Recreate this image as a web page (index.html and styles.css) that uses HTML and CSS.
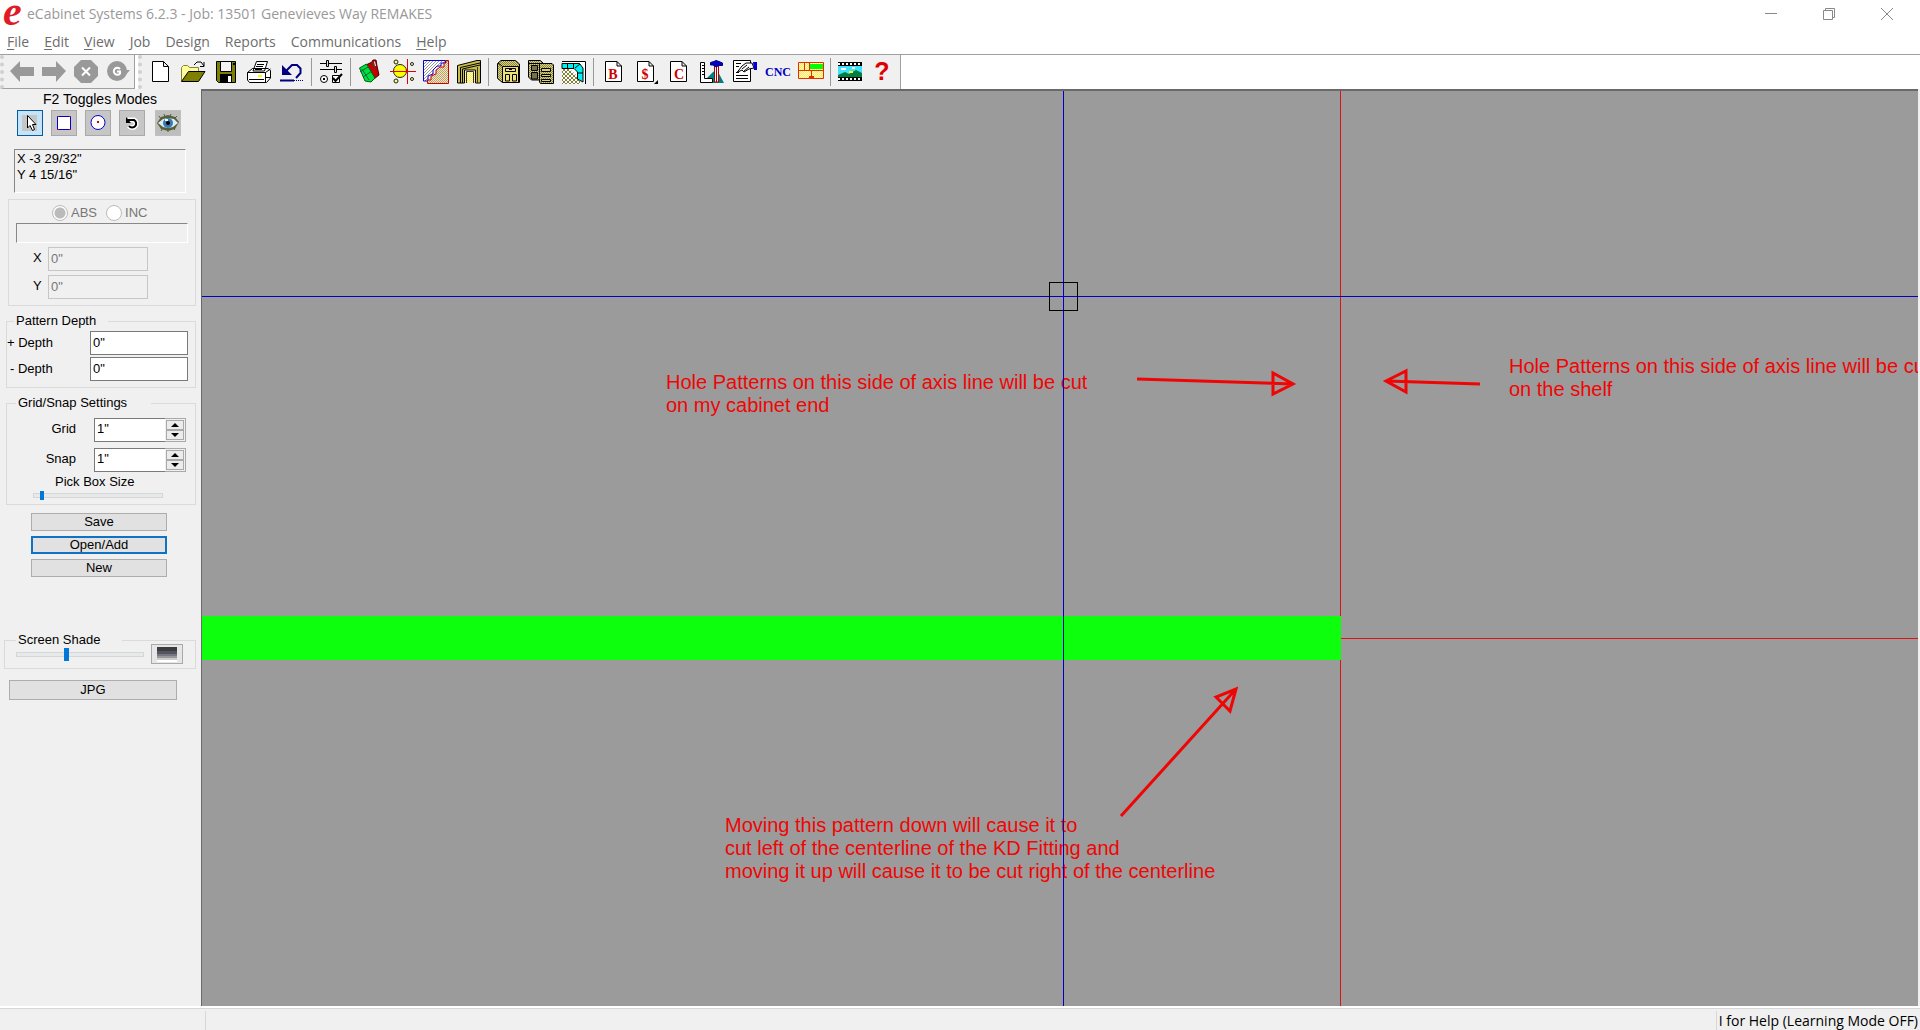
FILE: index.html
```html
<!DOCTYPE html>
<html lang="en">
<head>
<meta charset="utf-8">
<title>eCabinet Systems 6.2.3</title>
<link rel="stylesheet" href="styles.css">
</head>
<body>
<svg class="defs" width="0" height="0" aria-hidden="true">
  <defs>
    <pattern id="hatch" width="3" height="3" patternUnits="userSpaceOnUse"><rect width="3" height="3" fill="#fff"/><path d="M-1 1L1 -1M0 3L3 0M2 4L4 2" stroke="#999" stroke-width="1"/></pattern>
    <pattern id="tan" width="2" height="2" patternUnits="userSpaceOnUse"><rect width="2" height="2" fill="#f2e6c8"/><path d="M0 0h1v1h-1zM1 1h1v1h-1z" fill="#b9a46c"/></pattern>
    <pattern id="yellow" width="2" height="2" patternUnits="userSpaceOnUse"><rect width="2" height="2" fill="#fffbd0"/><path d="M0 0h1v1h-1zM1 1h1v1h-1z" fill="#fce94a"/></pattern>
    <pattern id="olive" width="2" height="2" patternUnits="userSpaceOnUse"><rect width="2" height="2" fill="#d6d08c"/><path d="M0 0h1v1h-1zM1 1h1v1h-1z" fill="#8c8638"/></pattern>
    <pattern id="check" width="4" height="4" patternUnits="userSpaceOnUse"><rect width="4" height="4" fill="#fff"/><path d="M0 0h2v2h-2zM2 2h2v2h-2z" fill="#85803a"/></pattern>
  </defs>
</svg>

<header class="titlebar">
  <svg class="logo" viewBox="0 0 22 26" aria-hidden="true"><text x="1" y="24">e</text></svg>
  <h1 class="title">eCabinet Systems 6.2.3 - Job: 13501 Genevieves Way REMAKES</h1>
  <div class="window-controls">
    <button aria-label="Minimize"><svg viewBox="0 0 14 14"><path d="M1 6.500h12"/></svg></button>
    <button aria-label="Restore"><svg viewBox="0 0 14 14"><path d="M1.500 3.500h9v9h-9zM3.500 3.500v-2h9v9h-2"/></svg></button>
    <button aria-label="Close"><svg viewBox="0 0 14 14"><path d="M1 1L13 13M13 1L1 13"/></svg></button>
  </div>
</header>

<nav class="menubar">
  <a href="#file"><u>F</u>ile</a><a href="#edit"><u>E</u>dit</a><a href="#view"><u>V</u>iew</a><a href="#job">Job</a><a href="#design">Design</a><a href="#reports">Reports</a><a href="#communications">Communications</a><a href="#help"><u>H</u>elp</a>
</nav>

<div class="toolbars">
  <div class="toolbar nav-tools" role="toolbar">
    <button aria-label="Back"><svg viewBox="0 0 26 26"><path fill="#999" d="M1 12L11 2V8H25V17H11V23Z"/></svg></button>
    <button aria-label="Forward"><svg viewBox="0 0 26 26"><path fill="#999" d="M25 12L15 2V8H1V17H15V23Z"/></svg></button>
    <button aria-label="Stop"><svg viewBox="0 0 26 26"><path fill="#999" d="M8 1H18L25 8V17L18 24H8L1 17V8Z"/><path d="M9 8.500L17 16.500M17 8.500L9 16.500" stroke="#fff" stroke-width="2"/></svg></button>
    <button aria-label="Refresh"><svg viewBox="0 0 26 26"><circle cx="12" cy="12" r="10" fill="#999"/><path fill="#999" d="M13 11H25L19 18Z"/><path d="M15 10A3.500 3.500 0 1 0 15 14.500V12.500H12" fill="none" stroke="#fff" stroke-width="2"/></svg></button>
  </div>
  <div class="toolbar main-tools" role="toolbar">
    <button aria-label="New"><svg viewBox="0 0 26 26"><path fill="#fff" stroke="#000" d="M5.500 2.500H16.500L21.500 7.500V22.500H5.500ZM16.500 2.500V7.500H21.500"/></svg></button>
    <button aria-label="Open"><svg viewBox="0 0 26 26"><path d="M14 6L17 3H21L24 7M24 3V7.500H20" fill="none" stroke="#000"/><path fill="#fffb9a" stroke="#85803a" d="M1.500 22V8.500L3.500 6.500H7.500L9.500 8.500H18.500V13"/><path fill="#808000" stroke="#000" d="M1.500 22.500L8.500 12.500H25L18.500 22.500Z"/></svg></button>
    <button aria-label="Save"><svg viewBox="0 0 26 26"><path fill="#808000" stroke="#000" d="M3.500 2.500H22.500V23.500H5.500L3.500 21.500Z"/><path fill="#f4f4f4" stroke="#000" d="M7.500 2.500H18.500V12.500H7.500Z"/><path d="M7 15H19V23H7Z"/><path fill="#fff" d="M15 17H18V23H15Z"/><path d="M20 4h2v2h-2z"/></svg></button>
    <button aria-label="Print"><svg viewBox="0 0 26 26"><path fill="#fff" stroke="#000" d="M7 12L10.500 2.500H21.500L18.500 12ZM1.500 13.500L6.500 9.500H22L24.500 11.500V19L20.500 23.500H3.500L1.500 21ZM1.500 13.500H19.500V23M19.500 13.500L24.500 10"/><path d="M11 5.500H18M10 7.500H17M9 10.500H16M3 20.500H18M20 18.500H24" stroke="#000"/><path d="M12 16h4v2h-4z" fill="#ff0"/></svg></button>
    <button aria-label="Undo"><svg viewBox="0 0 26 26"><path d="M7 12L13 6H18L21.500 9.500V14L17 19" fill="none" stroke="#000080" stroke-width="2"/><path fill="#000080" d="M3 6V16H13Z"/><path d="M1 21.500H15" stroke="#000080" stroke-width="2"/><path d="M15 21.500H24" stroke="#000080" stroke-dasharray="1 1"/></svg></button>
    <span class="sep"></span>
    <button aria-label="Settings"><svg viewBox="0 0 26 26"><path d="M2 4.500H24M2 10.500H24" stroke="#000"/><path fill="#ddd" stroke="#000" d="M8.500 1.500H10.500V7.500H8.500ZM16.500 7.500H18.500V13.500H16.500Z"/><circle cx="6" cy="20" r="3.500" fill="#fff" stroke="#000"/><path d="M5 19h2v2h-2z"/><path fill="#fff" stroke="#000" d="M14.500 16.500H21.500V23.500H14.500Z"/><path d="M15 19L17.500 22L24 15" stroke="#000" stroke-width="2" fill="none"/></svg></button>
    <span class="sep"></span>
    <button aria-label="Materials"><svg viewBox="0 0 26 26"><path fill="#c60000" stroke="#400" d="M9 6L15 3L16 1H19L20 7L22 16L17 20Z"/><path fill="#00e03a" stroke="#006010" d="M2.500 9L9.500 5L18 19L14 23L8 22Z"/><path d="M15 3L18 10M5 10L12 21M3 13L11 8M6 18L15 12" stroke="#064" fill="none"/><path d="M17.500 2.500L18.500 7" stroke="#fff" stroke-width="1"/></svg></button>
    <button aria-label="Boring"><svg viewBox="0 0 26 26"><circle cx="10" cy="12" r="6.500" fill="#ff0" stroke="#222"/><g fill="#fffb80" stroke="#222"><circle cx="6" cy="3" r="2"/><circle cx="6" cy="22" r="2"/><circle cx="22" cy="5" r="1.500"/><circle cx="22" cy="20" r="1.500"/></g><path d="M0 12.500H26M17.500 0V25" stroke="#e00000"/></svg></button>
    <button aria-label="Profiles"><svg viewBox="0 0 26 26"><path fill="url(#hatch)" stroke="#0000d8" stroke-width="1" d="M.5 1.500H22.500V4H18V7H14L10 11V15L5 17V22H.5Z"/><path fill="url(#tan)" stroke="#d00000" d="M25.500 1.500V24.500H4.500V21H8V17L13 15V11L17 8H21V4H23V1.500Z"/></svg></button>
    <button aria-label="Doors"><svg viewBox="0 0 26 26"><path fill="#c9be4a" stroke="#000" d="M1.500 24V6.500L21 1.500H24.500V24H19.500V11H8.500V24Z"/><path fill="none" stroke="#000" d="M4.500 24V8.500L24 4M6.500 24V10L24 6"/><path fill="url(#yellow)" d="M9 12H19V24H9Z"/><path fill="none" stroke="#333" d="M10.500 24V12.500H17.500V24M21.500 8V24"/></svg></button>
    <span class="sep"></span>
    <button aria-label="Cabinet"><svg viewBox="0 0 26 26"><path fill="url(#olive)" stroke="#000" d="M2.500 4.500L6 1.500H20.500L24.500 5V23.500H7.500L2.500 19.500Z"/><path fill="#eee07a" stroke="#000" d="M7.500 7.500H23.500V23.500H7.500ZM10.500 9.500H20.500V12.500H10.500ZM10.500 15.500H14.500V22H10.500ZM17.500 15.500H21.500V22H17.500Z"/><path d="M3 4L7 7M14 10.500H17" stroke="#000"/></svg></button>
    <button aria-label="Cabinet group"><svg viewBox="0 0 26 26"><path fill="url(#olive)" stroke="#000" d="M.5 1.500H12.500L15 4V21H3.500L.5 18ZM.5 4.500H14"/><path fill="#777050" stroke="#000" d="M3.500 6.500H9.500V11.500H3.500ZM3.500 13.500H9.500V20H3.500Z"/><path fill="url(#olive)" stroke="#000" d="M11.500 4.500H24L25.500 6V24.500H12.500L11.500 23Z"/><path fill="#d8d078" stroke="#000" d="M13.500 9.500H22.500V12.500H13.500ZM13.500 15.500H22.500V17.500H13.500ZM13.500 20.500H22.500V22.500H13.500Z"/></svg></button>
    <button aria-label="Room layout"><svg viewBox="0 0 26 26"><path fill="url(#check)" d="M1 9H19V25H1Z"/><path fill="#fff" stroke="#000" d="M1 2.500H24.500V25"/><path fill="#00f0f0" stroke="#000" d="M1 4.500H18.500L22 9V23L16.500 20V13L13 9.500H1Z"/><path d="M6.500 5V9M12.500 5V9M14 9L19 5M17 14H22" stroke="#000"/></svg></button>
    <span class="sep"></span>
    <button aria-label="Buy list"><svg viewBox="0 0 26 26"><path fill="#fff" stroke="#000" d="M5.500 2.500H17L21.500 7V22.500H5.500ZM17 2.500V7H21.500"/><text class="glyph" x="13" y="20">B</text></svg></button>
    <button aria-label="Pricing"><svg viewBox="0 0 26 26"><path fill="#fff" stroke="#000" d="M4.500 2.500H16L20.500 7V22.500H4.500ZM16 2.500V7H20.500"/><text class="glyph" x="12" y="20">$</text><path d="M25 21V25H21Z"/></svg></button>
    <button aria-label="Cut list"><svg viewBox="0 0 26 26"><path fill="#fff" stroke="#000" d="M4.500 2.500H16L20.500 7V22.500H4.500ZM16 2.500V7H20.500"/><text class="glyph" x="13" y="20">C</text></svg></button>
    <button aria-label="Shop tools"><svg viewBox="0 0 26 26"><path fill="#008080" d="M3 24L14 13L18 11L25 24Z"/><path fill="#fff" stroke="#000" d="M1.500 3.500H5.500V19.500H13.500V23.500H1.500Z"/><path d="M3 6.500H5M3 9.500H5M3 12.500H5M3 15.500H5" stroke="#000"/><path fill="#fff" stroke="#a00" d="M15.500 6H19.500V23H15.500Z"/><path d="M17.500 6V23" stroke="#a00"/><path fill="#0000c8" stroke="#000080" d="M11.500 3.500L15 2.500L17 1.500L20 2.500L23.500 4V6.500H20L17 8L14 6H11.500Z"/></svg></button>
    <button aria-label="Report form"><svg viewBox="0 0 26 26"><path fill="#fff" stroke="#000" d="M1.500 1.500H18.500V22.500H1.500Z"/><path d="M4 4.500H9M4 7.500H7M4 13.500H7M4 16.500H16M4 19.500H16" stroke="#000"/><path fill="#fff" stroke="#000" d="M5 13.500L10 7L14 4H20L22 9L17 10L12 13L10 11Z"/><path d="M10 10L15 6M12 12L17 8" stroke="#000"/><path fill="#0000d0" d="M21 3H25V11H22Z"/></svg></button>
    <button aria-label="CNC"><svg viewBox="0 0 26 26"><text class="cnc" x="13" y="17">CNC</text></svg></button>
    <button aria-label="Nesting"><svg viewBox="0 0 26 26"><path fill="url(#yellow)" d="M1 4H25V19H1Z"/><path fill="#0f0" d="M12 5H25V10H12Z"/><path fill="none" stroke="#e03000" d="M.5 3.500H25.500V19.500H.5ZM.5 11.500H25.500M6.500 4V11M11.500 4V11M13.500 12V19"/><path fill="#e03000" d="M11 19V17H13V15H14V17H16V19Z"/></svg></button>
    <span class="sep"></span>
    <button aria-label="Video"><svg viewBox="0 0 26 26"><path d="M1 3H25V22H1Z"/><path fill="#40e0ff" d="M1 7H25V18H1Z"/><path fill="#008040" d="M1 16L8 13L12 15L19 11L25 14V18H1Z"/><path fill="#fff" d="M4 9h5v2h-5zM15 8h3v2h-3z"/><path fill="#ff0" d="M12 12h4v2h-4z"/><path d="M1 5H25M1 20H25" stroke="#fff" stroke-width="2" stroke-dasharray="2 2"/></svg></button>
    <button aria-label="Help"><svg viewBox="0 0 26 26"><text class="help" x="12" y="21">?</text></svg></button>
  </div>
</div>

<main class="workspace">
  <aside class="sidebar">
    <h2 class="modes-title">F2 Toggles Modes</h2>
    <div class="modes">
      <button class="mode selected" aria-label="Select"><svg viewBox="0 0 24 24"><path fill="#c6c6c6" d="M4 4H19V20H4Z"/><path fill="#fff" stroke="#000" d="M9.500 4.500V17L12 14.500L14.500 19.500L16.500 18.500L14.500 13.500H18Z"/></svg></button>
      <button class="mode" aria-label="Rectangle"><svg viewBox="0 0 24 24"><path fill="#fff" stroke="#0000d0" d="M5.500 5.500H18.500V18.500H5.500Z"/><path fill="#d00020" d="M5 5h2v1h-2zM17 5h2v1h-2zM5 18h2v1h-2zM17 18h2v1h-2z"/></svg></button>
      <button class="mode" aria-label="Circle"><svg viewBox="0 0 24 24"><circle cx="12" cy="11.500" r="7" fill="#fff" stroke="#0000d0"/><path fill="#c00" d="M11 10h2v2h-2z"/></svg></button>
      <button class="mode" aria-label="Rotate"><svg viewBox="0 0 24 24"><path d="M8 9H14A4 4 0 1 1 9 15" fill="none" stroke="#fff" stroke-width="5"/><path d="M8 9H14A4 4 0 1 1 9 15" fill="none" stroke="#000" stroke-width="2"/><path d="M6 6V12H11Z"/></svg></button>
      <button class="mode view" aria-label="View"><svg viewBox="0 0 24 24"><path fill="#55603a" d="M1 12L5 6L12 4L19 6L23 11L19 18L12 20L5 18Z"/><path fill="#dcecf4" d="M2 12L7 8L12 7L18 8L22 12L17 16L12 17L7 16Z"/><circle cx="12" cy="12" r="5" fill="#3a7ab0"/><circle cx="12" cy="12" r="2"/><path fill="#fff" d="M9 8h3v2h-3z"/><path d="M3 5L5 8M8 3L9 6M15 3L14 6M21 5L18 8M5 20L7 17M12 21V18M19 19L17 17" stroke="#55603a"/></svg></button>
    </div>
    <output class="coords">X -3 29/32"<br>Y 4 15/16"</output>

    <fieldset class="group entry" disabled>
      <div class="radios">
        <label><input type="radio" name="coord" checked>ABS</label>
        <label><input type="radio" name="coord">INC</label>
      </div>
      <input class="command" type="text" aria-label="Command">
      <div class="axis-row"><label for="x">X</label><input id="x" type="text" value='0"'></div>
      <div class="axis-row"><label for="y">Y</label><input id="y" type="text" value='0"'></div>
    </fieldset>

    <fieldset class="group depth">
      <legend>Pattern Depth</legend>
      <div class="depth-row"><label for="plus">+ Depth</label><input id="plus" type="text" value='0"'></div>
      <div class="depth-row"><label for="minus">- Depth</label><input id="minus" type="text" value='0"'></div>
    </fieldset>

    <fieldset class="group grid">
      <legend>Grid/Snap Settings</legend>
      <div class="spin-row"><label for="grid">Grid</label>
        <div class="spinner"><input id="grid" type="text" value='1"'><div class="steps"><button aria-label="Grid up"><svg viewBox="0 0 8 4"><path d="M0 4L4 0L8 4Z"/></svg></button><button aria-label="Grid down"><svg viewBox="0 0 8 4"><path d="M0 0H8L4 4Z"/></svg></button></div></div>
      </div>
      <div class="spin-row"><label for="snap">Snap</label>
        <div class="spinner"><input id="snap" type="text" value='1"'><div class="steps"><button aria-label="Snap up"><svg viewBox="0 0 8 4"><path d="M0 4L4 0L8 4Z"/></svg></button><button aria-label="Snap down"><svg viewBox="0 0 8 4"><path d="M0 0H8L4 4Z"/></svg></button></div></div>
      </div>
      <label class="pick-label" for="pick">Pick Box Size</label>
      <input class="slider pick" id="pick" type="range" min="0" max="100" value="5">
    </fieldset>

    <div class="actions">
      <button class="btn">Save</button>
      <button class="btn primary">Open/Add</button>
      <button class="btn">New</button>
    </div>

    <fieldset class="group shade">
      <legend><label for="shade">Screen Shade</label></legend>
      <div class="shade-row">
        <input class="slider" id="shade" type="range" min="0" max="100" value="39">
        <button class="swatch" aria-label="Background shade"><span></span></button>
      </div>
    </fieldset>
    <button class="btn jpg">JPG</button>
  </aside>

  <section class="canvas" aria-label="Drawing">
    <div class="axis-v"></div>
    <div class="axis-h"></div>
    <div class="board"></div>
    <svg class="arrows" aria-hidden="true">
      <path d="M935 288L1091 293M1071 282V303L1091 293Z"/>
      <path d="M1278 293L1184 290M1204 280V301L1184 290Z"/>
      <path d="M919 725L1034 598M1014 606L1028 620L1034 598Z"/>
    </svg>
    <p class="note cabinet-note">Hole Patterns on this side of axis line will be cut<br>on my cabinet end</p>
    <p class="note shelf-note">Hole Patterns on this side of axis line will be cut<br>on the shelf</p>
    <p class="note move-note">Moving this pattern down will cause it to<br>cut left of the centerline of the KD Fitting and<br>moving it up will cause it to be cut right of the centerline</p>
    <div class="cross-v"></div>
    <div class="cross-h"></div>
    <div class="pickbox"></div>
  </section>
</main>

<footer class="statusbar">
  <span class="status-left"></span>
  <span class="status-help">I for Help (Learning Mode OFF)</span>
</footer>
</body>
</html>
```
FILE: styles.css
```css
* { box-sizing: border-box; }

body {
  margin: 0;
  min-height: 100vh;
  display: flex;
  flex-direction: column;
  overflow-x: hidden;
  background: #f0f0f0;
  color: #000;
  font: 13px/16px "Liberation Sans", Arial, sans-serif;
}

button { margin: 0; padding: 0; border: 0; background: none; font: inherit; color: inherit; }
input { margin: 0; font: inherit; color: inherit; border-radius: 0; min-width: 0; }
.defs { position: absolute; }

/* Title bar */
.titlebar { display: flex; align-items: center; height: 28px; padding-left: 2px; background: #fff; }
.logo { width: 22px; height: 26px; overflow: visible; }
.logo text { font: italic bold 42px "Liberation Serif", serif; fill: #e01b24; }
.title { flex: 1; margin: 0; padding-left: 3px; font: 14px/28px "Open Sans", sans-serif; color: #999; }
.window-controls { display: flex; padding-right: 4px; }
.window-controls button { width: 58px; height: 28px; display: grid; place-items: center; }
.window-controls svg { width: 14px; height: 14px; fill: none; stroke: #888; }

/* Menu */
.menubar { display: flex; gap: 15px; height: 27px; padding: 4px 7px 0; background: #fff; border-bottom: 1px solid #a0a0a0; }
.menubar a { color: #6d6d6d; font: 14px/20px "Open Sans", sans-serif; text-decoration: none; }
.menubar u { text-underline-offset: 2px; }

/* Toolbars */
.toolbars { display: flex; height: 34px; background: #fff; }
.toolbar { display: flex; align-items: center; background: #f0f0f0; border: solid #a0a0a0; border-width: 0 1px 1px 0; }
.nav-tools { padding-left: 2px; border-left: 4px dotted #d0d0d0; }
.main-tools { margin-left: 3px; padding: 0 1px; border-left: 4px dotted #d0d0d0; border-bottom: 0; }
.toolbar button { width: 33px; height: 30px; display: grid; place-items: center; }
.nav-tools button { width: 32px; }
.toolbar svg { width: 26px; height: 26px; overflow: visible; }
.sep { width: 1px; height: 28px; margin: 0 2px 0 3px; background: #999; }
.glyph { font: bold 14px "Liberation Serif", serif; fill: #d00000; text-anchor: middle; }
.cnc { font: bold 12px "Liberation Serif", serif; fill: #0000c0; text-anchor: middle; }
.help { font: bold 25px "Liberation Sans", sans-serif; fill: #e00000; text-anchor: middle; }

/* Workspace */
.workspace { flex: 1; display: flex; padding-right: 2px; }
.sidebar { width: 201px; flex: none; display: flex; flex-direction: column; padding: 2px 5px 0 4px; }
.modes-title { margin: 0; font-size: 14px; line-height: 16px; font-weight: normal; text-align: center; }
.modes { display: flex; gap: 8px; margin: 3px 0 0 13px; }
.mode { width: 26px; height: 26px; background: #c6c6c6; border: 1px solid #a9a9a9; }
.mode svg { display: block; width: 24px; height: 24px; }
.mode.selected { background: #c4e4fa; border-color: #0a5a9c; }
.mode.view { margin-left: 2px; border-color: #c0c0c0; background: #bdbdbd; }
.coords { display: block; height: 44px; margin: 13px 10px 6px; padding: 1px 2px; border: 1px solid; border-color: #888 #fff #fff #888; }

.group { margin: 0; padding: 0; border: 1px solid #dadada; min-width: 0; }
.group legend { margin-left: 8px; padding: 0 12px 0 2px; line-height: 14px; }

.entry { height: 107px; margin-left: 4px; padding: 3px 7px 0; color: #777; }
.radios { display: flex; gap: 9px; margin-left: 36px; height: 20px; }
.radios label { display: flex; align-items: center; gap: 3px; }
.radios input { appearance: none; width: 16px; height: 16px; border: 1px solid #bbb; border-radius: 50%; background: #fff; }
.radios input:checked { background: radial-gradient(circle, #bbb 5px, #fff 6px); }
.command { display: block; width: 172px; height: 20px; background: #f0f0f0; border: 1px solid; border-color: #888 #fff #fff #888; }
.axis-row { display: flex; gap: 5px; margin-top: 4px; padding-left: 17px; }
.axis-row label { width: 10px; line-height: 22px; color: #000; }
.axis-row input { width: 100px; height: 24px; padding: 0 2px 2px; color: #777; background: #f0f0f0; border: 1px solid #c6c6c6; }

.depth { height: 74px; margin: 8px 0 0 2px; }
.depth legend { margin-left: 7px; }
.depth-row { display: flex; justify-content: space-between; height: 26px; padding: 3px 7px 0 0; }
.depth-row label { line-height: 24px; }
.depth-row + .depth-row label { padding-left: 3px; }
.depth-row input { width: 98px; height: 24px; padding: 0 2px 2px; border: 1px solid #7a7a7a; background: #fff; }

.grid { height: 109px; margin: 8px 0 0 2px; }
.grid legend { margin-left: 9px; padding-right: 24px; }
.spin-row { display: flex; justify-content: space-between; height: 24px; margin: 6px 9px 0 0; }
.grid legend + .spin-row { margin-top: 8px; }
.spin-row label { width: 69px; text-align: right; line-height: 22px; }
.spinner { display: flex; width: 92px; border: 1px solid #a9a9a9; }
.spinner input { flex: 1; padding: 0 2px 2px; border: 1px solid #7a7a7a; border-right: 0; margin: -1px 0 -1px -1px; background: #fff; }
.steps { display: flex; flex-direction: column; width: 20px; padding: 1px; }
.steps button { flex: 1; display: grid; place-items: center; border: 1px solid #a9a9a9; background: #ececec; }
.steps svg { width: 8px; height: 4px; }
.pick-label { display: block; margin: 1px 0 0 48px; line-height: 17px; }

.slider { appearance: none; display: block; height: 14px; background: none; }
.slider::-webkit-slider-runnable-track { height: 5px; background: #e7eaea; border: 1px solid #d6d6d6; }
.slider::-webkit-slider-thumb { appearance: none; width: 5px; height: 13px; margin-top: -5px; background: #0078d7; }
.pick { width: 130px; height: 10px; margin-left: 26px; }
.pick::-webkit-slider-thumb { width: 4px; height: 9px; margin-top: -3px; }

.btn { height: 18px; line-height: 16px; text-align: center; border: 1px solid #adadad; background: #e1e1e1; }
.actions { display: flex; flex-direction: column; gap: 5px; margin: 8px 29px 0 27px; }
.actions .primary { border: 2px solid #0f72c4; line-height: 14px; }

.shade { height: 36px; margin-top: 56px; }
.shade legend { margin-left: 11px; padding-right: 22px; }
.shade-row { display: flex; justify-content: space-between; align-items: center; margin-top: -3px; padding: 0 12px 0 11px; }
.shade .slider { width: 128px; }
.swatch { width: 32px; height: 20px; display: grid; place-items: center; border: 1px solid #a9a9a9; background: #e6e6e6; }
.swatch span { width: 20px; height: 15px; background: linear-gradient(#3c3c40 0 4px, #55555c 4px 7px, #777784 7px 9px, #999 9px 11px, #ccc 11px 13px, #fff 13px); }
.jpg { height: 20px; margin: 11px 19px 0 5px; }

/* Drawing area: free placement of axes, board and notes */
.canvas { position: relative; flex: 1; overflow: hidden; background: #9b9b9b; border: solid #696969; border-width: 2px 0 0 1px; }
.canvas > * { position: absolute; }
.axis-v { left: 1138px; top: 0; bottom: 0; width: 1px; background: #d81414; }
.axis-h { left: 1138px; right: 0; top: 547px; height: 1px; background: #d81414; }
.board { left: 0; top: 525px; width: 1139px; height: 44px; background: #0dff0d; }
.arrows { left: 0; top: 0; width: 100%; height: 100%; fill: none; stroke: #f00505; stroke-width: 3; }
.note { margin: 0; font-size: 20px; line-height: 23px; white-space: nowrap; color: #f00505; }
.cabinet-note { left: 464px; top: 280px; }
.shelf-note { left: 1307px; top: 264px; }
.move-note { left: 523px; top: 723px; }
.cross-v { left: 861px; top: 0; bottom: 0; width: 1px; background: #0000c8; }
.cross-h { left: 0; right: 0; top: 205px; height: 1px; background: #0000c8; }
.pickbox { left: 847px; top: 191px; width: 29px; height: 29px; border: 1px solid #000; }

/* Status bar */
.statusbar { display: flex; justify-content: space-between; height: 24px; padding-right: 2px; border-top: 2px solid #fff; box-shadow: inset 0 1px #d7d7d7; font: 14px/22px "Open Sans", sans-serif; }
.status-left { width: 206px; margin-top: 3px; border-right: 1px solid #d7d7d7; }
.status-help { margin-top: 3px; padding-left: 2px; line-height: 19px; border-left: 1px solid #d7d7d7; }
```
